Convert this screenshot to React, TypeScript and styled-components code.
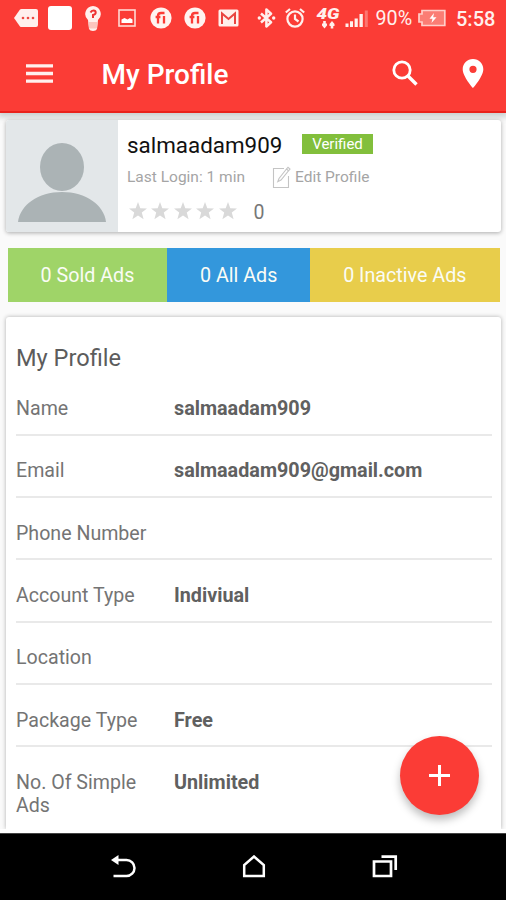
import React from "react";
import styled, { createGlobalStyle } from "styled-components";

const RED = "#fb3c36";

const GlobalStyle = createGlobalStyle`
  * { box-sizing: border-box; }
  body {
    margin: 0;
    background: #fafafa;
    font-family: Roboto, "Liberation Sans", sans-serif;
    overflow: hidden;
  }
  svg { display: block; flex: none; }
`;

const Screen = styled.div`
  position: relative;
  width: 506px;
  height: 900px;
  display: flex;
  flex-direction: column;
  overflow: hidden;
`;

const Header = styled.header`
  flex: none;
  height: 113px;
  background: ${RED};
  border-bottom: 2px solid #ea221c;
  box-shadow: 0 2px 6px 2px rgba(60, 85, 85, 0.26);
  color: #fff;
`;

const StatusBar = styled.div`
  height: 36px;
  display: flex;
  align-items: center;
  padding-left: 14px;
`;

const Slot = styled.div<{ $w: number }>`
  flex: none;
  width: ${(p) => p.$w}px;
  color: #fff0ed;
`;

const StatusText = styled.div<{ $w: number; $size: number; $weight?: number }>`
  flex: none;
  width: ${(p) => p.$w}px;
  font-size: ${(p) => p.$size}px;
  font-weight: ${(p) => p.$weight ?? 400};
  line-height: 36px;
  padding-top: 2px;
  color: #fff0ed;
  white-space: nowrap;
`;

const Toolbar = styled.div`
  height: 75px;
  display: flex;
  align-items: center;
  padding: 0 18px 0 26px;
`;

const ToolbarTitle = styled.h1`
  flex: 1;
  margin: 0 0 0 48.5px;
  font-size: 28px;
  font-weight: 500;
  line-height: 34px;
  padding-top: 2px;
`;

const Actions = styled.div`
  display: flex;
  align-items: center;
  gap: 40px;
  padding-bottom: 1px;
`;

const UserCard = styled.section`
  flex: none;
  height: 112px;
  margin: 7px 5px 0 6px;
  display: flex;
  background: #fff;
  border-radius: 3px;
  box-shadow: 0 1px 4px rgba(0, 0, 0, 0.32);
  overflow: hidden;
  z-index: 1;
`;

const Avatar = styled.div`
  width: 112px;
  background: #e3e7e9;
`;

const UserInfo = styled.div`
  padding: 10px 0 0 9px;
`;

const InfoLine = styled.div<{ $h: number }>`
  height: ${(p) => p.$h}px;
  display: flex;
  align-items: center;
`;

const UserName = styled.span`
  width: 175px;
  padding-top: 1px;
  font-size: 22.4px;
  color: #111;
`;

const Badge = styled.span`
  width: 71px;
  height: 20px;
  background: #82bf3c;
  color: #fff;
  font-size: 15px;
  line-height: 21px;
  text-align: center;
`;

const Muted = styled.span<{ $w: number }>`
  width: ${(p) => p.$w}px;
  font-size: 15.5px;
  color: #a5a5a5;
  white-space: nowrap;
`;

const Stars = styled.div`
  display: flex;
  gap: 4.6px;
  padding-left: 1.5px;
`;

const Rating = styled.span`
  margin-left: 16.5px;
  padding-top: 2px;
  font-size: 19.5px;
  color: #777;
`;

const Tabs = styled.nav`
  flex: none;
  display: grid;
  grid-template-columns: 159.6px 142.7px 189.7px;
  height: 54.3px;
  margin: 15.7px 0 0 7.7px;
`;

const Tab = styled.div<{ $bg: string }>`
  display: flex;
  align-items: center;
  justify-content: center;
  padding-top: 3px;
  background: ${(p) => p.$bg};
  color: #fafcf5;
  font-size: 19.7px;
  line-height: 24px;
`;

const Details = styled.section`
  flex: none;
  height: 512px;
  margin: 15px 5px 0 6px;
  padding: 26px 9px 0 10px;
  background: #fff;
  border-radius: 3px 3px 0 0;
  box-shadow: 0 0 4px rgba(0, 0, 0, 0.3);
`;

const DetailsTitle = styled.h2`
  margin: 0;
  height: 30.6px;
  font-size: 23.6px;
  font-weight: 400;
  line-height: 30px;
  color: #5c5c5c;
`;

const Row = styled.div`
  height: 62.3px;
  display: grid;
  grid-template-columns: 158px 1fr;
  padding-top: 23.5px;
  border-bottom: 2px solid #e9e9e9;
  font-size: 19.6px;
  line-height: 23px;

  &:last-child { border-bottom: 0; }
`;

const Label = styled.div`
  color: #747474;
  max-width: 140px;
`;

const Value = styled.div`
  color: #606060;
  font-size: 19.75px;
  font-weight: 700;
`;

const Fab = styled.button`
  position: absolute;
  left: 400px;
  top: 736px;
  width: 79px;
  height: 79px;
  padding: 0;
  border: 0;
  border-radius: 50%;
  background: ${RED};
  display: flex;
  align-items: center;
  justify-content: center;
  box-shadow: 0 5px 9px rgba(0, 0, 0, 0.26);
  z-index: 3;
`;

const NavBar = styled.footer`
  flex: none;
  height: 67px;
  margin-top: auto;
  background: #000;
  border-top: 1px solid #444;
  box-shadow: 0 -4px 0 #fff;
  z-index: 2;
  display: flex;
  align-items: center;
  padding-left: 110px;
  gap: 106px;
`;

const CircledGlyph = () => (
  <svg width="22" height="22" viewBox="0 0 22 22">
    <circle cx="11" cy="11" r="10.6" fill="#fff3f0" />
    <path
      d="M8 16.500V8.800q0-2.800 3-2.800h3.500M5.600 10h4.800M14 9v7.500"
      fill="none"
      stroke={RED}
      strokeWidth="2.300"
    />
  </svg>
);

const Star = () => (
  <svg width="18" height="18" viewBox="0 0 18 18">
    <path d="M9 0l2.300 6.200 6.700.3-5.200 4.100 1.800 6.600L9 13.500l-5.600 3.700 1.800-6.600L0 6.500l6.700-.3z" fill="#d9d9d9" />
  </svg>
);

const StatusIcons = () => (
  <StatusBar>
    <Slot $w={34}>
      <svg width="24" height="20" viewBox="0 0 24 20">
        <path d="M0 10l6-8.500q.5-.5 1.500-.5H22q2 0 2 2v14q0 2-2 2H7.500q-1 0-1.500-.5z" fill="currentColor" />
        <g fill="#ed4a42">
          <circle cx="9" cy="10" r="1.300" />
          <circle cx="14" cy="10" r="1.300" />
          <circle cx="19" cy="10" r="1.300" />
        </g>
      </svg>
    </Slot>
    <Slot $w={37}>
      <svg width="24" height="24" viewBox="0 0 24 24">
        <rect width="24" height="24" rx="3" fill="#fff" />
      </svg>
    </Slot>
    <Slot $w={33}>
      <svg width="16" height="25" viewBox="0 0 16 25">
        <path d="M8 0a8 8 0 0 1 5 14l-1 9q-1 2-4 2t-4-2l-1-9A8 8 0 0 1 8 0z" fill="currentColor" />
        <path d="M5.500 6.500q1-2 3-2 2.200 0 2.200 2T8 9v3" fill="none" stroke="#e33" strokeWidth="2" />
        <path d="M3.300 16h9.400l-.8 6.500H4.100z" fill="#fcc5be" />
      </svg>
    </Slot>
    <Slot $w={32}>
      <svg width="18" height="18" viewBox="0 0 18 18">
        <rect x="1" y="1" width="16" height="16" fill="none" stroke="#ffd9d4" strokeWidth="1.600" />
        <path d="M3.500 14v-3.500l3-1.500 3 1.500 2.500-1.500 2.500 1.500V14z" fill="#fff" />
      </svg>
    </Slot>
    <Slot $w={34}><CircledGlyph /></Slot>
    <Slot $w={34}><CircledGlyph /></Slot>
    <Slot $w={39}>
      <svg width="21" height="18" viewBox="0 0 21 18">
        <rect x=".5" y=".5" width="20" height="17" rx="1.500" fill="#fff0ec" />
        <path d="M4 15V4.500l6.500 5.500L17 4.500V15" fill="none" stroke="#e94540" strokeWidth="2" />
      </svg>
    </Slot>
    <Slot $w={28}>
      <svg width="19" height="20" viewBox="0 0 19 20">
        <path
          d="M4 5.500l10 8.800-4.600 4.200V1.500L14 5.700l-10 8.800"
          fill="none"
          stroke="currentColor"
          strokeWidth="2.500"
          strokeLinejoin="round"
        />
        <circle cx="2.300" cy="10" r="1.700" fill="currentColor" />
        <circle cx="16.700" cy="10" r="1.700" fill="currentColor" />
      </svg>
    </Slot>
    <Slot $w={30}>
      <svg width="20" height="20" viewBox="0 0 20 20" fill="none" stroke="currentColor" strokeWidth="2.200">
        <circle cx="10" cy="11" r="7.600" />
        <path d="M10 6.500V11l3.500 2.500M.8 4.500L5 1M19.200 4.500L15 1" />
      </svg>
    </Slot>
    <Slot $w={30}>
      <svg width="28" height="32" viewBox="-2 -5 28 32" fill="currentColor">
        <text
          x="-0.500"
          y="12"
          textLength="23"
          lengthAdjust="spacingAndGlyphs"
          fontFamily="Roboto, sans-serif"
          fontSize="15.500"
          fontWeight="900"
          fontStyle="italic"
        >
          4G
        </text>
        <path d="M5 16.500h1.200V14h2.600v2.500H10v2L7.500 21.500 5 18.500zM12.500 17l2.500-3 2.500 3v2h-1.200v2.500h-2.600V19h-1.200z" />
      </svg>
    </Slot>
    <Slot $w={30.5}>
      <svg width="24" height="20" viewBox="0 0 24 20" fill="currentColor">
        <path d="M.5 15.500h3V19h-3zM5 13.200h3V19H5zM9.600 10.500h3.200V19H9.600zM14.500 6h3.300v13h-3.300z" />
        <path d="M19.800 2.500h3V19h-3z" opacity=".32" />
      </svg>
    </Slot>
    <StatusText $w={42.5} $size={19.7}>90%</StatusText>
    <Slot $w={38}>
      <svg width="28" height="18" viewBox="0 0 28 18">
        <path d="M4 1.500h22.800v15H4V13H1V5h3z" fill="#fb7d74" stroke="#ffcfc9" strokeWidth="1.700" />
        <path d="M16 4l-4.500 5.700h3l-1 4.300 5-5.700h-3.300z" fill="#fff" />
      </svg>
    </Slot>
    <StatusText $w={44} $size={20} $weight={500}>5:58</StatusText>
  </StatusBar>
);

const rows: [string, string][] = [
  ["Name", "salmaadam909"],
  ["Email", "salmaadam909@gmail.com"],
  ["Phone Number", ""],
  ["Account Type", "Indiviual"],
  ["Location", ""],
  ["Package Type", "Free"],
  ["No. Of Simple Ads", "Unlimited"],
];

export default function App() {
  return (
    <Screen>
      <GlobalStyle />
      <Header>
        <StatusIcons />
        <Toolbar>
          <svg width="27" height="20" viewBox="0 0 27 20">
            <path d="M0 1.800h27M0 9.500h27M0 17.200h27" stroke="#fff0ee" strokeWidth="3.300" />
          </svg>
          <ToolbarTitle>My Profile</ToolbarTitle>
          <Actions>
            <svg width="26" height="26" viewBox="0 0 26 26" fill="none" stroke="#fff" strokeWidth="2.800">
              <circle cx="10" cy="10" r="8.200" />
              <path d="M16 16l8.500 8.500" strokeWidth="3.400" />
            </svg>
            <svg width="30" height="30" viewBox="0 0 30 30">
              <path
                d="M15 1c-5.800 0-10.300 4.500-10.300 10.200C4.700 18.500 15 30 15 30s10.300-11.500 10.300-18.800C25.300 5.500 20.800 1 15 1zm0 6.700a3.600 3.600 0 1 1 0 7.200 3.600 3.600 0 0 1 0-7.200z"
                fill="#fff"
              />
            </svg>
          </Actions>
        </Toolbar>
      </Header>

      <UserCard>
        <Avatar>
          <svg width="112" height="112" viewBox="0 0 112 112" fill="#abb3b5">
            <ellipse cx="56" cy="47" rx="22" ry="24" />
            <path d="M12 102c2-17 20-30 44-30s42 13 44 30z" />
          </svg>
        </Avatar>
        <UserInfo>
          <InfoLine $h={28}>
            <UserName>salmaadam909</UserName>
            <Badge>Verified</Badge>
          </InfoLine>
          <InfoLine $h={38}>
            <Muted $w={145}>Last Login: 1 min</Muted>
            <svg width="23" height="23" viewBox="0 0 23 23" fill="none" stroke="#c4c4c4" strokeWidth="1.100">
              <path d="M12 2.500H1.500v19h15V10" />
              <path d="M14.500 3l2 1.800L9 14l-3.200 1.700L7 12.500zM14.500 3L16 1.300l2 1.800-1.500 1.700" />
            </svg>
            <Muted $w={90}>Edit Profile</Muted>
          </InfoLine>
          <InfoLine $h={30}>
            <Stars>
              <Star /><Star /><Star /><Star /><Star />
            </Stars>
            <Rating>0</Rating>
          </InfoLine>
        </UserInfo>
      </UserCard>

      <Tabs>
        <Tab $bg="#9fd468">0 Sold Ads</Tab>
        <Tab $bg="#3397dc">0 All Ads</Tab>
        <Tab $bg="#e8cd4b">0 Inactive Ads</Tab>
      </Tabs>

      <Details>
        <DetailsTitle>My Profile</DetailsTitle>
        {rows.map(([label, value]) => (
          <Row key={label}>
            <Label>{label}</Label>
            <Value>{value}</Value>
          </Row>
        ))}
      </Details>

      <Fab aria-label="Add">
        <svg width="21" height="21" viewBox="0 0 21 21">
          <path d="M10.500 0v21M0 10.500h21" stroke="#fff" strokeWidth="3" />
        </svg>
      </Fab>

      <NavBar>
        <svg width="26" height="24" viewBox="0 0 26 24">
          <path d="M6 5h10.500a8 8 0 0 1 0 16H3.500" fill="none" stroke="#fff" strokeWidth="2.500" />
          <path d="M1 5L8.500 0v10z" fill="#fff" />
        </svg>
        <svg width="24" height="24" viewBox="0 0 24 24">
          <path d="M2.200 21V10L12 1.500l9.800 8.500v11z" fill="none" stroke="#fff" strokeWidth="2.500" />
        </svg>
        <svg width="26" height="24" viewBox="0 0 26 24" fill="none" stroke="#fff" strokeWidth="2.700">
          <path d="M2 6.500h17V21H2zM9.500 1.600h14.200V15" />
        </svg>
      </NavBar>
    </Screen>
  );
}
